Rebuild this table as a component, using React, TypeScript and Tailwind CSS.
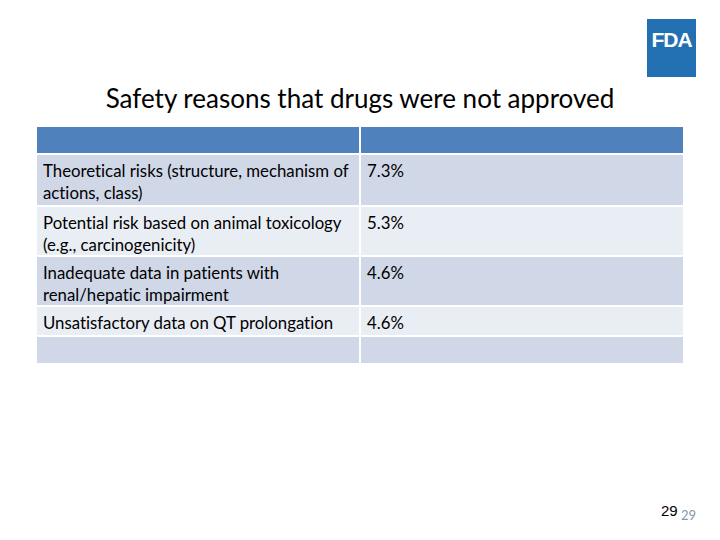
const rows = [
  { label: "Theoretical risks (structure, mechanism of actions, class)", value: "7.3%", h: "h-[50px]", bg: "bg-[#d0d8e8]" },
  { label: "Potential risk based on animal toxicology (e.g., carcinogenicity)", value: "5.3%", h: "h-[48px]", bg: "bg-[#e9edf4]" },
  { label: "Inadequate data in patients with renal/hepatic impairment", value: "4.6%", h: "h-[48px]", bg: "bg-[#d0d8e8]" },
  { label: "Unsatisfactory data on QT prolongation", value: "4.6%", h: "h-[28px]", bg: "bg-[#e9edf4]" },
  { label: "", value: "", h: "h-[26px]", bg: "bg-[#d0d8e8]" },
];

export default function App() {
  return (
    <div className="relative w-[720px] h-[540px] bg-white overflow-hidden font-['Lato','Liberation_Sans',sans-serif] text-black [font-variant-ligatures:none]">
      <div className="absolute left-[647px] top-[19px] w-[49px] h-[58px] bg-[#2270b2] flex justify-center pt-[10px]">
        <span className="text-white font-bold text-[21px] leading-none tracking-[-1px] font-['Liberation_Sans',sans-serif]">
          FDA
        </span>
      </div>

      <div className="pt-[82px] flex flex-col items-center">
        <h1 className="text-[26px] leading-[32px] font-normal">
          Safety reasons that drugs were not approved
        </h1>
      </div>

      <div className="mt-[13px] ml-[37px] w-[646px] flex flex-col gap-[2px]">
        <div className="flex gap-[2px] h-[26px]">
          <div className="w-[322px] bg-[#4f81bd]" />
          <div className="flex-1 bg-[#4f81bd]" />
        </div>
        {rows.map((r, i) => (
          <div key={i} className={`flex gap-[2px] ${r.h}`}>
            <div className={`w-[322px] ${r.bg} pl-[6px] pr-[3px] pt-[5px] text-[16.8px] leading-[22px]`}>
              {r.label}
            </div>
            <div className={`flex-1 ${r.bg} pl-[6px] pt-[5px] text-[16.8px] leading-[22px]`}>
              {r.value}
            </div>
          </div>
        ))}
      </div>

      <div className="absolute left-[661px] top-[503px] text-[15px] leading-none font-['Liberation_Sans',sans-serif]">29</div>
      <div className="absolute left-[681px] top-[509px] text-[13px] leading-none text-[#8497b0]">29</div>
    </div>
  );
}
